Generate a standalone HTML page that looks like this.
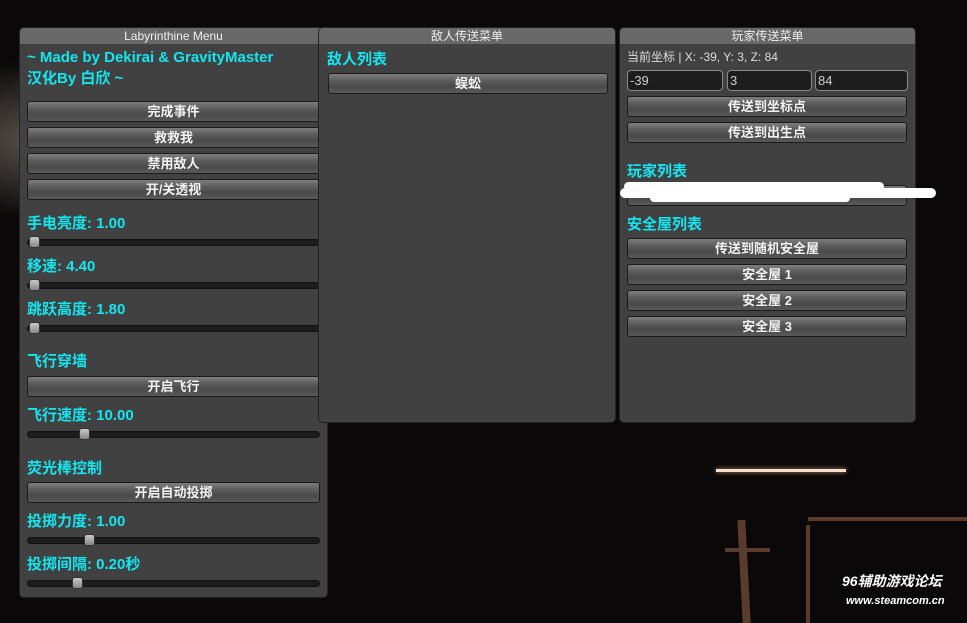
<!DOCTYPE html>
<html><head><meta charset="utf-8"><style>
*{margin:0;padding:0;box-sizing:border-box}
body{width:967px;height:623px;overflow:hidden;position:relative;
background:radial-gradient(ellipse 140px 80px at 40px 140px,#5a524c,transparent),
radial-gradient(ellipse 40px 20px at 690px 380px,#3a3430,transparent),#0a0808;
font-family:"Liberation Sans","Noto Sans CJK SC",sans-serif}
.p{position:absolute;background:#414141;border:1px solid #222;border-radius:5px;overflow:hidden}
.t{height:16px;background:#686868;color:#eee;font-size:12px;text-align:center;line-height:16px}
.a{position:absolute;color:#14e6f0;font-weight:bold;font-size:15px;white-space:nowrap}
.b{position:absolute;height:21px;border:1px solid #1a1a1a;border-radius:3px;
background:linear-gradient(#7e7e7e,#5c5c5c 35%,#4a4a4a 65%,#585858);color:#f2f2f2;font-weight:bold;font-size:13px;text-align:center;line-height:19px}
.s{position:absolute;height:7px;border-radius:4px;background:#1c1c1c;border:1px solid #111}
.k{position:absolute;top:-4px;width:11px;height:12px;border-radius:3px;background:linear-gradient(#c8c8c8,#888);border:1px solid #333}
.i{position:absolute;height:21px;background:#1d1d1d;border:1px solid #8a8a8a;border-radius:4px;color:#ccc;font-size:13px;line-height:19px;padding-left:2px}
.g{position:absolute;background:#5a3c2c}
</style></head><body>
<div class="g" style="left:740px;top:520px;width:8px;height:103px;transform:rotate(-3deg)"></div>
<div class="g" style="left:725px;top:548px;width:45px;height:4px"></div>
<div class="g" style="left:808px;top:517px;width:159px;height:4px"></div>
<div class="g" style="left:806px;top:525px;width:4px;height:98px"></div>
<div style="position:absolute;left:716px;top:469px;width:130px;height:3px;background:#f4e0d0;box-shadow:0 0 5px #c89070"></div>
<div style="position:absolute;left:842px;top:571px;color:#fff;font-style:italic;font-weight:bold;font-size:14px">96辅助游戏论坛</div>
<div style="position:absolute;left:846px;top:595px;color:#fff;font-style:italic;font-weight:bold;font-size:11px">www.steamcom.cn</div>

<div class="p" style="left:19px;top:27px;width:309px;height:571px">
<div class="t">Labyrinthine Menu</div>
<div class="a" style="left:7px;top:21px">~ Made by Dekirai &amp; GravityMaster</div>
<div class="a" style="left:7px;top:39px">汉化By 白欣 ~</div>
<div class="b" style="left:7px;top:73px;width:293px">完成事件</div>
<div class="b" style="left:7px;top:99px;width:293px">救救我</div>
<div class="b" style="left:7px;top:125px;width:293px">禁用敌人</div>
<div class="b" style="left:7px;top:151px;width:293px">开/关透视</div>
<div class="a" style="left:7px;top:184px">手电亮度: 1.00</div>
<div class="s" style="left:7px;top:211px;width:293px"><div class="k" style="left:1px"></div></div>
<div class="a" style="left:7px;top:227px">移速: 4.40</div>
<div class="s" style="left:7px;top:254px;width:293px"><div class="k" style="left:1px"></div></div>
<div class="a" style="left:7px;top:270px">跳跃高度: 1.80</div>
<div class="s" style="left:7px;top:297px;width:293px"><div class="k" style="left:1px"></div></div>
<div class="a" style="left:7px;top:322px">飞行穿墙</div>
<div class="b" style="left:7px;top:348px;width:293px">开启飞行</div>
<div class="a" style="left:7px;top:376px">飞行速度: 10.00</div>
<div class="s" style="left:7px;top:403px;width:293px"><div class="k" style="left:51px"></div></div>
<div class="a" style="left:7px;top:429px">荧光棒控制</div>
<div class="b" style="left:7px;top:454px;width:293px">开启自动投掷</div>
<div class="a" style="left:7px;top:482px">投掷力度: 1.00</div>
<div class="s" style="left:7px;top:509px;width:293px"><div class="k" style="left:56px"></div></div>
<div class="a" style="left:7px;top:525px">投掷间隔: 0.20秒</div>
<div class="s" style="left:7px;top:552px;width:293px"><div class="k" style="left:44px"></div></div>
</div>

<div class="p" style="left:318px;top:27px;width:298px;height:396px">
<div class="t">敌人传送菜单</div>
<div class="a" style="left:8px;top:20px">敌人列表</div>
<div class="b" style="left:9px;top:45px;width:280px">蜈蚣</div>
</div>

<div class="p" style="left:619px;top:27px;width:297px;height:396px">
<div class="t">玩家传送菜单</div>
<div style="position:absolute;left:7px;top:20px;color:#ddd;font-size:12px">当前坐标 | X: -39, Y: 3, Z: 84</div>
<div class="i" style="left:7px;top:42px;width:96px">-39</div>
<div class="i" style="left:107px;top:42px;width:85px">3</div>
<div class="i" style="left:195px;top:42px;width:93px">84</div>
<div class="b" style="left:7px;top:68px;width:280px">传送到坐标点</div>
<div class="b" style="left:7px;top:94px;width:280px">传送到出生点</div>
<div class="a" style="left:7px;top:132px">玩家列表</div>
<div class="b" style="left:7px;top:157px;width:280px"></div>
<div style="position:absolute;left:4px;top:154px;width:260px;height:9px;background:#fff;border-radius:5px"></div>
<div style="position:absolute;left:0;top:160px;width:300px;height:10px;background:#fff;border-radius:5px"></div>
<div style="position:absolute;left:30px;top:166px;width:200px;height:8px;background:#fff;border-radius:4px"></div>
<div class="a" style="left:7px;top:185px">安全屋列表</div>
<div class="b" style="left:7px;top:210px;width:280px">传送到随机安全屋</div>
<div class="b" style="left:7px;top:236px;width:280px">安全屋 1</div>
<div class="b" style="left:7px;top:262px;width:280px">安全屋 2</div>
<div class="b" style="left:7px;top:288px;width:280px">安全屋 3</div>
</div>
<div style="position:absolute;left:900px;top:188px;width:36px;height:10px;background:#fff;border-radius:5px"></div>
</body></html>
